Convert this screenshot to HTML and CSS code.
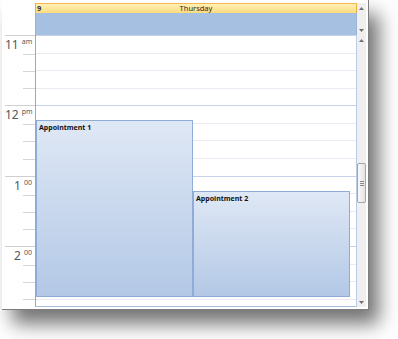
FILE: index.html
```html
<!DOCTYPE html>
<html>
<head>
<meta charset="utf-8">
<link rel="stylesheet" href="styles.css">
</head>
<body>
<div class="frame">
  <div class="cal">
    <div class="corner"></div>
    <div class="dayhead">
      <div class="daytitle"><span class="daynum">9</span><span class="dayname">Thursday</span><span></span></div>
      <div class="allday"></div>
    </div>
    <div class="vscroll">
      <div class="sb-top">
        <div class="sb-btn"><svg width="5" height="3" viewBox="0 0 5 3"><path d="M0 3 L2.5 0 L5 3 Z"/></svg></div>
        <div class="sb-btn"><svg width="5" height="3" viewBox="0 0 5 3"><path d="M0 0 L5 0 L2.5 3 Z"/></svg></div>
      </div>
      <div class="sb-main">
        <div class="sb-btn"><svg width="5" height="3" viewBox="0 0 5 3"><path d="M0 3 L2.5 0 L5 3 Z"/></svg></div>
        <div class="track">
          <div class="thumb"><span class="grip"></span></div>
        </div>
        <div class="sb-btn"><svg width="5" height="3" viewBox="0 0 5 3"><path d="M0 0 L5 0 L2.5 3 Z"/></svg></div>
      </div>
    </div>
    <div class="gutter">
      <div class="hour">
        <div class="q first"><span class="hnum">11</span><span class="sup">am</span></div>
        <div class="q"></div><div class="q"></div><div class="q"></div>
      </div>
      <div class="hour">
        <div class="q first"><span class="hnum">12</span><span class="sup">pm</span></div>
        <div class="q"></div><div class="q"></div><div class="q"></div>
      </div>
      <div class="hour">
        <div class="q first"><span class="hnum">1</span><span class="sup">00</span></div>
        <div class="q"></div><div class="q"></div><div class="q"></div>
      </div>
      <div class="hour">
        <div class="q first"><span class="hnum">2</span><span class="sup">00</span></div>
        <div class="q"></div><div class="q"></div><div class="q"></div>
      </div>
    </div>
    <div class="daybody">
      <div class="hour"><div class="q first"></div><div class="q"></div><div class="q"></div><div class="q"></div></div>
      <div class="hour"><div class="q first"></div><div class="q"></div><div class="q"></div><div class="q"></div></div>
      <div class="hour"><div class="q first"></div><div class="q"></div><div class="q"></div><div class="q"></div></div>
      <div class="hour"><div class="q first"></div><div class="q"></div><div class="q"></div><div class="q"></div></div>
      <div class="appt a1">Appointment 1</div>
      <div class="appt a2">Appointment 2</div>
    </div>
  </div>
</div>
</body>
</html>
```
FILE: styles.css
```css
* { box-sizing: border-box; }
html, body { margin: 0; padding: 0; background: #fff; }
body {
  font-family: "Noto Sans", "Open Sans", sans-serif;
  color: #222;
  min-height: 339px;
}

.frame {
  margin-left: 2px;
  width: 367px;
  height: 310px;
  padding-right: 2px;
  padding-bottom: 2px;
  border-right: 1px solid #7d7d7d;
  border-bottom: 1px solid #7d7d7d;
  background: #fff;
  box-shadow: 10px 14px 18px rgba(0, 0, 0, 0.55);
}

.cal {
  display: grid;
  grid-template-columns: 33px 322px 9px;
  grid-template-rows: 35px 272px;
}

.corner { grid-column: 1; grid-row: 1; }

.dayhead {
  grid-column: 2;
  grid-row: 1;
  padding-top: 3px;
  display: flex;
  flex-direction: column;
}
.daytitle {
  height: 10px;
  border-top: 1px solid #f2b84a;
  border-left: 1px solid #e2ad55;
  border-right: 1px solid #eab24e;
  background: linear-gradient(#fff0b6, #fcdb7e);
  display: grid;
  grid-template-columns: 1fr auto 1fr;
  align-items: center;
  font-size: 7.5px;
  line-height: 9px;
  color: #2a2a2a;
}
.daynum { font-weight: bold; padding-left: 1px; }
.dayname { text-align: center; }
.allday {
  flex: 1;
  background: #a6c0e1;
  border-left: 1px solid #d5ab68;
  border-right: 1px solid #9bb4d9;
}

.vscroll {
  grid-column: 3;
  grid-row: 1 / 3;
  padding-top: 3px;
  display: flex;
  flex-direction: column;
}
.sb-top {
  height: 32px;
  background: #efefef;
  display: flex;
  flex-direction: column;
  justify-content: space-between;
}
.sb-main {
  flex: 1;
  background: #efefef;
  display: flex;
  flex-direction: column;
}
.sb-btn {
  height: 10px;
  display: flex;
  align-items: center;
  justify-content: center;
}
.sb-btn svg { display: block; fill: #6f6f6f; }
.track { flex: 1; }
.thumb {
  margin-top: 118px;
  height: 40px;
  border: 1px solid #a6a6a6;
  border-radius: 2px;
  background: linear-gradient(to right, #fafafa, #e3e3e3);
  display: flex;
  align-items: center;
  justify-content: center;
}
.grip {
  width: 4px;
  height: 5px;
  background: repeating-linear-gradient(#8a8a8a 0 1px, transparent 1px 2px);
}

.gutter {
  grid-column: 1;
  grid-row: 2;
  overflow: hidden;
}
.hour {
  height: 70.33px;
  display: flex;
  flex-direction: column;
}
.q { flex: 1; }

.gutter .q { border-top: 1px solid #d6d6d6; margin-left: 21px; }
.gutter .q.first {
  margin-left: 3px;
  border-top-color: #cfcfcf;
  text-align: right;
  padding-right: 3px;
  padding-top: 2px;
  white-space: nowrap;
  color: #505860;
  font-size: 12px;
  line-height: 14px;
}
.sup {
  font-size: 7px;
  line-height: 8px;
  vertical-align: top;
  margin-left: 3px;
}

.daybody {
  grid-column: 2;
  grid-row: 2;
  position: relative;
  overflow: hidden;
  border-left: 1px solid #8eaad6;
  border-right: 1px solid #b9cbe6;
  border-bottom: 1px solid #a9bfe0;
}
.daybody .q { border-top: 1px solid #e8ecf2; }
.daybody .q.first { border-top-color: #c5d4ea; }

.appt {
  position: absolute;
  border: 1px solid #8fabd8;
  background: linear-gradient(#dfe8f5, #b3c8e6);
  font-size: 7px;
  line-height: 10px;
  font-weight: bold;
  color: #111;
  padding: 2px 2px;
}
.a1 { left: 0; top: 85px; width: 157px; height: 177px; }
.a2 { left: 157px; top: 156px; width: 157px; height: 106px; }
```
